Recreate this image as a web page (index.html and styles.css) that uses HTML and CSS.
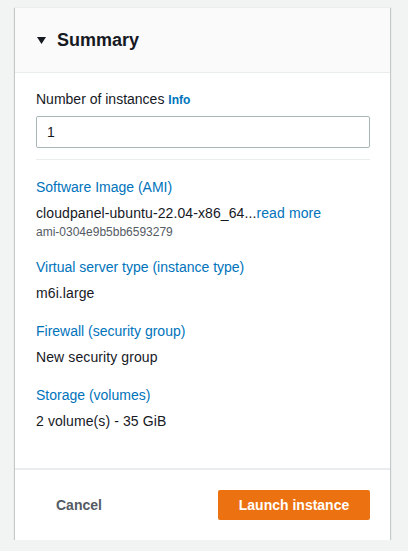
FILE: index.html
```html
<!DOCTYPE html>
<html lang="en">
<head>
<meta charset="utf-8">
<title>Summary</title>
<link rel="stylesheet" href="styles.css">
</head>
<body>
<div class="card">
  <div class="card-header">
    <svg class="caret" width="9" height="7" viewBox="0 0 9 7"><path d="M0 0 H9 L4.5 7 Z" fill="#16191f"/></svg>
    <h2 class="title">Summary</h2>
  </div>
  <div class="card-body">
    <div class="field">
      <label class="field-label">Number of instances <a class="info">Info</a></label>
      <div class="input">1</div>
    </div>
    <div class="divider"></div>
    <div class="item">
      <a class="item-label">Software Image (AMI)</a>
      <div class="item-value">cloudpanel-ubuntu-22.04-x86_64...<a class="more">read more</a></div>
      <div class="item-sub">ami-0304e9b5bb6593279</div>
    </div>
    <div class="item">
      <a class="item-label">Virtual server type (instance type)</a>
      <div class="item-value">m6i.large</div>
    </div>
    <div class="item">
      <a class="item-label">Firewall (security group)</a>
      <div class="item-value">New security group</div>
    </div>
    <div class="item">
      <a class="item-label">Storage (volumes)</a>
      <div class="item-value">2 volume(s) - 35 GiB</div>
    </div>
  </div>
  <div class="card-footer">
    <button class="btn-link">Cancel</button>
    <button class="btn-primary">Launch instance</button>
  </div>
</div>
</body>
</html>
```

FILE: styles.css
```css
html, body {
  margin: 0;
  padding: 0;
}
body {
  background: #f2f3f3;
  font-family: "Liberation Sans", Arial, sans-serif;
  font-size: 14px;
  line-height: 22px;
  color: #16191f;
  padding: 7px 0 0 15px;
}
.card {
  width: 375px;
  background: #fff;
  box-shadow: 0 1px 1px 0 rgba(0, 28, 36, 0.3), 1px 1px 1px 0 rgba(0, 28, 36, 0.15), -1px 1px 1px 0 rgba(0, 28, 36, 0.15);
  border-top: 1px solid #eaeded;
}
.card-header {
  height: 64px;
  background: #fafafa;
  border-bottom: 1px solid #eaeded;
  display: flex;
  align-items: center;
  padding: 0 21px 0 22px;
  gap: 11px;
}
.caret {
  display: block;
  margin-top: 1px;
}
.title {
  margin: 0;
  font-size: 18px;
  font-weight: 700;
  line-height: 22px;
}
.card-body {
  padding: 15px 20px 36px 21px;
}
.field-label {
  display: block;
}
.info {
  color: #0073bb;
  font-weight: 700;
  font-size: 12px;
}
.input {
  margin-top: 5px;
  height: 30px;
  border: 1px solid #aab7b8;
  border-radius: 2px;
  padding: 0 10px;
  line-height: 30px;
  box-sizing: content-box;
  width: 312px;
}
.divider {
  height: 1px;
  background: #eaeded;
  margin: 11px 0 16px;
  width: 334px;
}
.item + .item {
  margin-top: 16px;
}
.item-label {
  display: block;
  color: #0073bb;
}
.item-value {
  margin-top: 4px;
  letter-spacing: 0.1px;
}
.more {
  color: #0073bb;
}
.item-sub {
  font-size: 12px;
  line-height: 16px;
  color: #545b64;
}
.card-footer {
  border-top: 2px solid #eaeded;
  padding: 20px 20px 20px 21px;
  display: flex;
  justify-content: space-between;
  align-items: center;
}
.btn-link {
  background: none;
  border: none;
  font-family: inherit;
  font-size: 14px;
  font-weight: 700;
  color: #545b64;
  padding: 4px 20px;
  line-height: 22px;
}
.btn-primary {
  background: #ec7211;
  border: none;
  border-radius: 2px;
  color: #fff;
  font-family: inherit;
  font-size: 14px;
  font-weight: 700;
  height: 30px;
  width: 152px;
  padding: 0;
}
```
